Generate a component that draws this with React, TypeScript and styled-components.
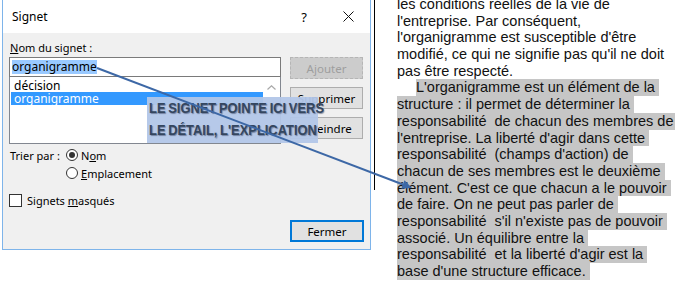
import React from "react";
import styled, { createGlobalStyle } from "styled-components";

type TLine = {
  text: string;
  hl?: boolean;
  indent?: boolean;
}

const GlobalStyle = createGlobalStyle`
  html, body {
    margin: 0;
    padding: 0;
    background: #fff;
    overflow: hidden;
  }
`;

const Page = styled.div`
  position: relative;
  display: flex;
  align-items: flex-start;
  width: 675px;
  height: 286px;
  padding-left: 2px;
  box-sizing: border-box;
  overflow: hidden;
`;

const Dialog = styled.div`
  width: 369px;
  height: 250px;
  box-sizing: border-box;
  border: 1px solid #7eb4ea;
  border-top: none;
  display: flex;
  flex-direction: column;
  font-family: "Noto Sans", "Open Sans", sans-serif;
  font-size: 11px;
  color: #000;
  flex-shrink: 0;
`;

const TitleBar = styled.div`
  height: 33px;
  background: #fff;
  display: flex;
  align-items: center;
  padding-left: 9px;
  font-size: 12px;
`;

const Title = styled.div`
  flex: 1;
`;

const TitleBtn = styled.div`
  width: 44px;
  height: 33px;
  display: flex;
  align-items: center;
  justify-content: center;
  font-size: 13px;
`;

const Body = styled.div`
  flex: 1;
  background: #f0f0f0;
  padding: 7px 7px 0 6px;
  display: flex;
  flex-direction: column;
`;

const TopGrid = styled.div`
  display: grid;
  grid-template-columns: 272px 73px;
  column-gap: 9px;
`;

const Stack = styled.div`
  display: flex;
  flex-direction: column;
`;

const Label = styled.div`
  height: 16px;
  line-height: 16px;
  padding-left: 1px;
  margin-bottom: 1px;
`;

const U = styled.span`
  text-decoration: underline;
`;

const Input = styled.div`
  height: 20px;
  box-sizing: border-box;
  border: 1px solid #7a7a7a;
  background: #fff;
  padding: 0 2px;
  display: flex;
  align-items: center;
  overflow: hidden;
`;

const Selection = styled.span`
  background: #99c9ff;
  line-height: 14px;
  font-size: 12px;
`;

const List = styled.div`
  height: 67px;
  box-sizing: border-box;
  border: 1px solid #828790;
  border-top: none;
  background: #fff;
  display: flex;
  padding: 2px 0 0 1px;
`;

const Rows = styled.div`
  flex: 1;
`;

const Row = styled.div<{ selected?: boolean }>`
  height: 13px;
  line-height: 13px;
  padding-left: 3px;
  font-size: 12px;
  background: ${p => p.selected ? "#3399ff" : "transparent"};
  color: ${p => p.selected ? "#fff" : "#000"};
`;

const ScrollBar = styled.div`
  width: 17px;
  display: flex;
  justify-content: center;
  padding-top: 6px;
`;

const ButtonStack = styled.div`
  display: flex;
  flex-direction: column;
  gap: 8px;
  padding-top: 17px;
`;

const Button = styled.div<{ disabled?: boolean; primary?: boolean }>`
  height: 22px;
  box-sizing: border-box;
  display: flex;
  align-items: center;
  justify-content: center;
  background: ${p => p.disabled ? "#cccccc" : "#e1e1e1"};
  border: ${p => p.primary ? "2px solid #0078d7" : p.disabled ? "1px dashed #b5b5b5" : "1px solid #adadad"};
  color: ${p => p.disabled ? "#9e9e9e" : "#000"};
  font-size: 11.5px;
`;

const SortRow = styled.div`
  display: grid;
  grid-template-columns: 56px auto;
  margin-top: 2px;
  padding-left: 1px;
`;

const OptionRow = styled.div`
  height: 18px;
  display: flex;
  align-items: center;
  gap: 3px;
`;

const Radio = styled.div<{ checked?: boolean }>`
  width: 12px;
  height: 12px;
  box-sizing: border-box;
  border: 1px solid #333;
  border-radius: 50%;
  background: #fff;
  display: flex;
  align-items: center;
  justify-content: center;
  &::after {
    content: "";
    width: 6px;
    height: 6px;
    border-radius: 50%;
    background: ${p => p.checked ? "#333" : "transparent"};
  }
`;

const CheckRow = styled.div`
  height: 18px;
  margin-top: 9px;
  display: flex;
  align-items: center;
  gap: 5px;
`;

const CheckBox = styled.div`
  width: 13px;
  height: 13px;
  box-sizing: border-box;
  border: 1px solid #333;
  background: #fff;
`;

const Footer = styled.div`
  display: flex;
  justify-content: flex-end;
  margin-top: 11px;
`;

const FooterButton = styled(Button)`
  width: 74px;
  margin-right: -1px;
`;

const Divider = styled.div`
  width: 1px;
  height: 190px;
  background: #000;
  margin-left: 3px;
  flex-shrink: 0;
`;

const Doc = styled.div`
  margin-left: 22px;
  margin-top: -4px;
  font-family: "Liberation Sans", Arial, sans-serif;
  font-size: 14.5px;
  line-height: 16.7px;
  color: #111;
  white-space: pre;
`;

const Line = styled.div<{ indent?: boolean }>`
  height: 16.7px;
  padding-left: ${p => p.indent ? "19px" : "0"};
`;

const Mark = styled.span<{ hl?: boolean }>`
  display: inline-block;
  height: 16.7px;
  background: ${p => p.hl ? "#c6c6c6" : "transparent"};
`;

const Callout = styled.div`
  position: absolute;
  left: 147px;
  top: 97px;
  width: 171px;
  height: 46px;
  box-sizing: border-box;
  padding-left: 2px;
  background: rgba(178, 198, 232, 0.95);
`;

const CalloutText = styled.div`
  font-family: "Liberation Sans", Arial, sans-serif;
  font-weight: bold;
  font-size: 14.5px;
  line-height: 22px;
  color: #34465f;
  text-shadow: 1px 1px 1px rgba(30, 40, 70, 0.45);
  word-spacing: -1px;
  white-space: nowrap;
  transform: scaleX(0.89);
  transform-origin: left center;
`;

const Overlay = styled.svg`
  position: absolute;
  left: 0;
  top: 0;
  pointer-events: none;
`;

const lines: TLine[] = [
  { text: "les conditions réelles de la vie de" },
  { text: "l'entreprise. Par conséquent," },
  { text: "l'organigramme est susceptible d'être" },
  { text: "modifié, ce qui ne signifie pas qu'il ne doit" },
  { text: "pas être respecté." },
  { text: "L'organigramme est un élément de la ", hl: true, indent: true },
  { text: "structure : il permet de déterminer la ", hl: true },
  { text: "responsabilité  de chacun des membres de ", hl: true },
  { text: "l'entreprise. La liberté d'agir dans cette ", hl: true },
  { text: "responsabilité  (champs d'action) de ", hl: true },
  { text: "chacun de ses membres est le deuxième ", hl: true },
  { text: "élément. C'est ce que chacun a le pouvoir ", hl: true },
  { text: "de faire. On ne peut pas parler de ", hl: true },
  { text: "responsabilité  s'il n'existe pas de pouvoir ", hl: true },
  { text: "associé. Un équilibre entre la ", hl: true },
  { text: "responsabilité  et la liberté d'agir est la ", hl: true },
  { text: "base d'une structure efficace. ", hl: true },
];

const App = () => {
  return (
    <Page>
      <GlobalStyle />
      <Dialog>
        <TitleBar>
          <Title>Signet</Title>
          <TitleBtn>?</TitleBtn>
          <TitleBtn>
            <svg width="11" height="11" viewBox="0 0 11 11">
              <path d="M0.5 0.5 L10.5 10.5 M10.5 0.5 L0.5 10.5" stroke="#111" strokeWidth="1" />
            </svg>
          </TitleBtn>
        </TitleBar>
        <Body>
          <TopGrid>
            <Stack>
              <Label><U>N</U>om du signet :</Label>
              <Input><Selection>organigramme</Selection></Input>
              <List>
                <Rows>
                  <Row>décision</Row>
                  <Row selected>organigramme</Row>
                </Rows>
                <ScrollBar>
                  <svg width="9" height="5" viewBox="0 0 9 5">
                    <path d="M0.5 4.5 L4.5 0.8 L8.5 4.5" stroke="#a8a8a8" strokeWidth="1.2" fill="none" />
                  </svg>
                </ScrollBar>
              </List>
            </Stack>
            <ButtonStack>
              <Button disabled>Ajouter</Button>
              <Button>Supprimer</Button>
              <Button>Atteindre</Button>
            </ButtonStack>
          </TopGrid>
          <SortRow>
            <OptionRow>Trier par :</OptionRow>
            <Stack>
              <OptionRow><Radio checked /><span>N<U>o</U>m</span></OptionRow>
              <OptionRow><Radio /><span><U>E</U>mplacement</span></OptionRow>
            </Stack>
          </SortRow>
          <CheckRow><CheckBox /><span>Signets <U>m</U>asqués</span></CheckRow>
          <Footer>
            <FooterButton primary>Fermer</FooterButton>
          </Footer>
        </Body>
      </Dialog>
      <Divider />
      <Doc>
        {lines.map((l, i) => (
          <Line key={i} indent={l.indent}>
            <Mark hl={l.hl}>{l.text}</Mark>
          </Line>
        ))}
      </Doc>
      <Callout>
        <CalloutText>LE SIGNET POINTE ICI VERS</CalloutText>
        <CalloutText>LE DÉTAIL, L'EXPLICATION</CalloutText>
      </Callout>
      <Overlay width="675" height="286" viewBox="0 0 675 286">
        <line x1="97" y1="68" x2="403" y2="184.5" stroke="#3d68a6" strokeWidth="2" />
        <polygon points="412,188 401.3,188.8 404.5,180.2" fill="#3d68a6" />
      </Overlay>
    </Page>
  );
};

export default App;
